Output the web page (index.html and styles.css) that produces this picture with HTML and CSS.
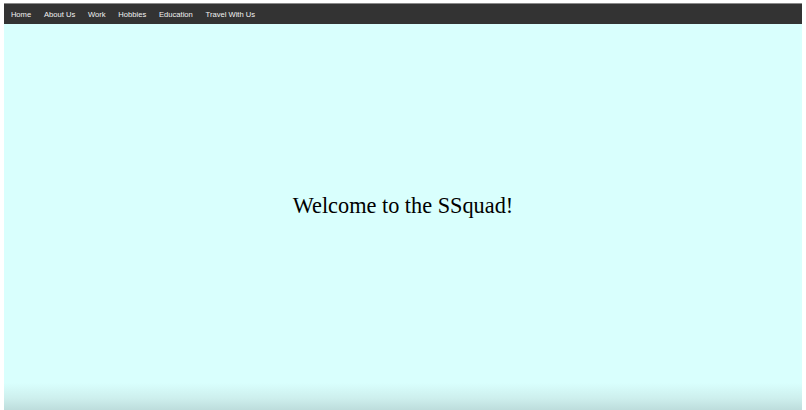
FILE: index.html
```html
<!DOCTYPE html>
<html lang="en">
<head>
<meta charset="utf-8">
<title>SSquad</title>
<link rel="stylesheet" href="styles.css">
</head>
<body>
<div class="frame">
  <nav class="topnav">
    <a href="#">Home</a>
    <a href="#">About Us</a>
    <a href="#">Work</a>
    <a href="#">Hobbies</a>
    <a href="#">Education</a>
    <a href="#">Travel With Us</a>
  </nav>
  <main class="hero">
    <h1 class="title">Welcome to the SSquad!</h1>
  </main>
</div>
</body>
</html>
```
FILE: styles.css
```css
html, body {
  margin: 0;
  padding: 0;
  height: 100%;
}
body {
  background: #ffffff;
  overflow: hidden;
}
.frame {
  height: 410px;
  box-sizing: border-box;
  padding: 3px 4px 0 4px;
  display: flex;
  flex-direction: column;
}
.topnav {
  background: #333333;
  height: 21px;
  display: flex;
  align-items: center;
  padding-left: 0.5px;
  border-top: 1px solid #8a8a8a;
  box-sizing: border-box;
}
.topnav a {
  font-family: "Liberation Sans", Arial, sans-serif;
  font-size: 7.6px;
  color: #f2f2f2;
  text-decoration: none;
  padding: 0 6.4px;
}
.hero {
  flex: 1;
  background: linear-gradient(to bottom, #d9fffd 0, #d9fffd 93%, #cdefed 97%, #bddddc 100%);
  display: flex;
  align-items: center;
  justify-content: center;
}
.title {
  margin: 0 0 22px 0;
  font-family: "Liberation Serif", "Times New Roman", serif;
  font-weight: normal;
  font-size: 22.3px;
  color: #000000;
}
```
